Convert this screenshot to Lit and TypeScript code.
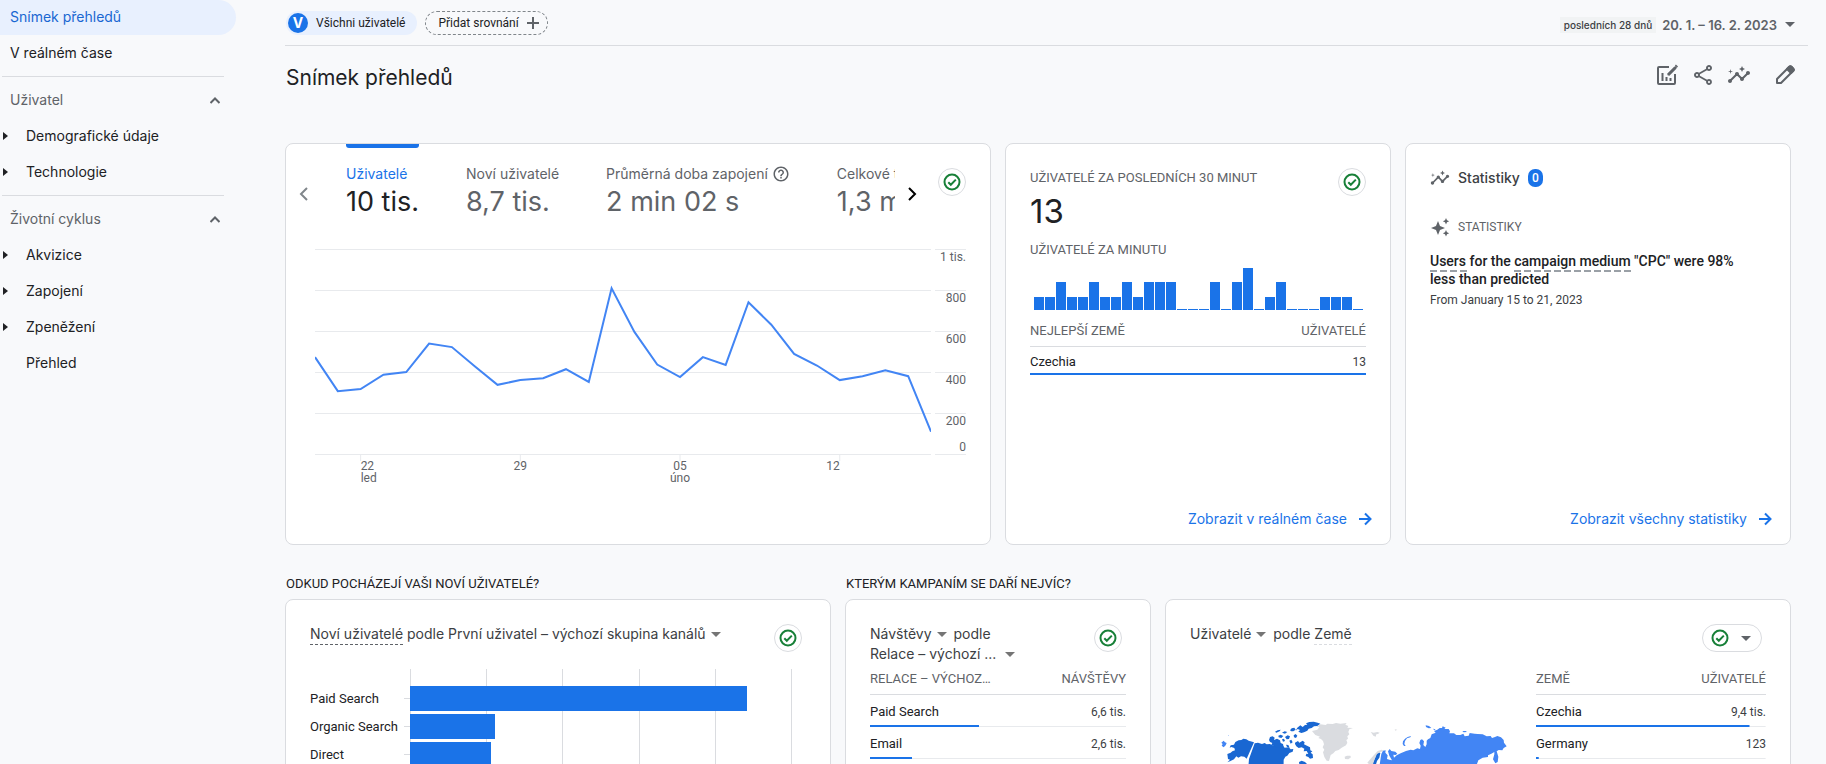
import { LitElement, html, svg, css, nothing } from "lit";
import { customElement, property } from "lit/decorators.js";
import { classMap } from "lit/directives/class-map.js";

const INSIGHTS =
  "M21 8c-1.45 0-2.26 1.44-1.93 2.51l-3.55 3.56c-.3-.09-.74-.09-1.04 0l-2.55-2.55C12.27 10.45 11.46 9 10 9c-1.45 0-2.27 1.44-1.93 2.52l-4.56 4.55C2.44 15.74 1 16.55 1 18c0 1.1.9 2 2 2 1.45 0 2.26-1.44 1.93-2.51l4.55-4.56c.3.09.74.09 1.04 0l2.55 2.55C12.73 16.55 13.54 18 15 18c1.45 0 2.27-1.44 1.93-2.52l3.56-3.55C21.56 12.26 23 11.45 23 10c0-1.1-.9-2-2-2z M15 9l.94-2.07L18 6l-2.06-.93L15 3l-.92 2.07L12 6l2.08.93z M3.5 11L4 9l2-.5L4 8l-.5-2L3 8l-2 .5L3 9z";
const SHARE =
  "M18 16.08c-.76 0-1.44.3-1.96.77L8.91 12.7c.05-.23.09-.46.09-.7s-.04-.47-.09-.7l7.05-4.11c.54.5 1.25.81 2.04.81 1.66 0 3-1.34 3-3s-1.34-3-3-3-3 1.34-3 3c0 .24.04.47.09.7L8.04 9.81C7.5 9.31 6.79 9 6 9c-1.66 0-3 1.34-3 3s1.34 3 3 3c.79 0 1.5-.31 2.04-.81l7.12 4.16c-.05.21-.08.43-.08.65 0 1.61 1.31 2.92 2.92 2.92s2.92-1.31 2.92-2.92c0-1.61-1.31-2.92-2.92-2.92zM18 4c.55 0 1 .45 1 1s-.45 1-1 1-1-.45-1-1 .45-1 1-1zM6 13c-.55 0-1-.45-1-1s.45-1 1-1 1 .45 1 1-.45 1-1 1zm12 7.02c-.55 0-1-.45-1-1s.45-1 1-1 1 .45 1 1-.45 1-1 1z";
const HELP =
  "M11 18h2v-2h-2v2zm1-16C6.48 2 2 6.48 2 12s4.48 10 10 10 10-4.48 10-10S17.52 2 12 2zm0 18c-4.41 0-8-3.59-8-8s3.59-8 8-8 8 3.59 8 8-3.59 8-8 8zm0-14c-2.21 0-4 1.79-4 4h2c0-1.1.9-2 2-2s2 .9 2 2c0 2-3 1.75-3 5h2c0-2.25 3-2.5 3-5 0-2.21-1.79-4-4-4z";

const filled = (d: string, size: number) =>
  html`<svg width=${size} height=${size} viewBox="0 0 24 24" fill="currentColor" aria-hidden="true"><path d=${d}></path></svg>`;

const caret = html`<svg class="caret" width="10" height="5" viewBox="0 0 10 5" fill="currentColor" aria-hidden="true"><path d="M0 0h10L5 5z"></path></svg>`;

const arrowRight = html`<svg width="14" height="14" viewBox="0 0 14 14" fill="none" stroke="currentColor" stroke-width="2" aria-hidden="true"><path d="M1 7h11M7 1.500l5.500 5.500L7 12.500"></path></svg>`;

const check = html`<svg width="18" height="18" viewBox="0 0 18 18" fill="none" stroke="#188038" stroke-width="2" aria-hidden="true"><circle cx="9" cy="9" r="7.500"></circle><path d="M5.300 9.300l2.500 2.500 5-5.200"></path></svg>`;

const shared = css`
  * { box-sizing: border-box; }
  button { border: 0; background: none; padding: 0; margin: 0; color: inherit; font: inherit; text-align: left; }
  a { color: inherit; text-decoration: none; }
  h1, h2, h3, p, ul { margin: 0; padding: 0; font: inherit; }
  svg { display: block; flex: none; }
  table { width: 100%; border-collapse: collapse; }
`;

interface NavItem { text: string; child?: boolean; arrow?: boolean; active?: boolean; }

@customElement("report-nav")
class ReportNav extends LitElement {
  static styles = [shared, css`
    :host { display: block; font: 14px/36px Inter, sans-serif; color: #202124; }
    .item { display: flex; align-items: center; height: 36px; padding-left: 10px; }
    .active { height: 35px; padding-bottom: 1px; background: #e8f0fe; color: #1967d2; border-radius: 0 18px 18px 0; }
    .child { padding-left: 3px; gap: 18px; }
    .child.flat { padding-left: 26px; }
    .group { margin: 5px 12px 0 2px; padding-top: 5px; border-top: 1px solid #dadce0; }
    .toggle { display: flex; align-items: center; justify-content: space-between; width: 100%; height: 36px; padding: 0 4px 0 8px; color: #5f6368; }
  `];
  private item(i: NavItem) {
    return html`<a href="#" class=${classMap({ item: true, active: !!i.active, child: !!i.child, flat: !!i.child && !i.arrow })}>
      ${i.arrow ? html`<svg width="5" height="8" viewBox="0 0 5 8" fill="currentColor" aria-hidden="true"><path d="M0 0l5 4-5 4z"></path></svg>` : nothing}
      <span>${i.text}</span></a>`;
  }
  private group(title: string, items: NavItem[]) {
    return html`<div class="group"><button class="toggle">${title}
      <svg width="10" height="7" viewBox="0 0 10 7" fill="none" stroke="currentColor" stroke-width="2" aria-hidden="true"><path d="M.5 6L5 1.500 9.500 6"></path></svg>
      </button></div>${items.map((i) => this.item(i))}`;
  }
  render() {
    const sub = (text: string, arrow = true): NavItem => ({ text, child: true, arrow });
    return html`<nav>
      ${this.item({ text: "Snímek přehledů", active: true })}
      ${this.item({ text: "V reálném čase" })}
      ${this.group("Uživatel", [sub("Demografické údaje"), sub("Technologie")])}
      ${this.group("Životní cyklus", [sub("Akvizice"), sub("Zapojení"), sub("Zpeněžení"), sub("Přehled", false)])}
    </nav>`;
  }
}

@customElement("status-badge")
class StatusBadge extends LitElement {
  @property({ type: Boolean }) menu = false;
  static styles = [shared, css`
    :host { display: block; flex: none; }
    .badge { display: flex; align-items: center; justify-content: center; gap: 12px; min-width: 28px; height: 28px; border: 1px solid #dadce0; border-radius: 14px; background: #fff; color: #5f6368; }
    .wide { width: 60px; padding-right: 3px; }
  `];
  render() {
    return html`<button class=${classMap({ badge: true, wide: this.menu })} aria-label="Stav dat">${check}${this.menu ? caret : nothing}</button>`;
  }
}

interface Row { name: string; value: string; share: number; }

@customElement("ranked-table")
class RankedTable extends LitElement {
  @property({ attribute: false }) rows: Row[] = [];
  @property() left = "";
  @property() right = "";
  @property({ type: Boolean, reflect: true }) compact = false;
  static styles = [shared, css`
    :host { display: block; font: 12px/20px Roboto, sans-serif; color: #3c4043; }
    th { padding: 0 0 5px; font-size: 13px; font-weight: 400; color: #5f6368; text-align: left; white-space: nowrap; border-bottom: 1px solid #dadce0; }
    td { padding: 7px 0 5px; }
    :host([compact]) td { padding: 5px 0 3px; }
    .name { font-size: 13px; color: #202124; }
    .num { text-align: right; }
    .row {
      background:
        linear-gradient(#1a73e8, #1a73e8) 0 100% / var(--share) 2px no-repeat,
        linear-gradient(#e8eaed, #e8eaed) 0 100% / 100% 1px no-repeat;
    }
  `];
  render() {
    return html`<table>
      <thead><tr><th>${this.left}</th><th class="num">${this.right}</th></tr></thead>
      <tbody>${this.rows.map((r) => html`<tr class="row" style="--share:${r.share}%"><td class="name">${r.name}</td><td class="num">${r.value}</td></tr>`)}</tbody>
    </table>`;
  }
}

const DAILY = [475, 309, 319, 389, 402, 541, 524, 431, 340, 363, 372, 416, 354, 811, 598, 439, 378, 475, 437, 743, 633, 491, 434, 363, 382, 411, 382, 111];

@customElement("trend-chart")
class TrendChart extends LitElement {
  static styles = [shared, css`
    :host { display: grid; grid-template-columns: 1fr 31px; column-gap: 4px; font: 12px/14px Roboto, sans-serif; color: #5f6368; }
    .plot { width: 100%; height: 212px; }
    .step { display: flex; flex-direction: column; justify-content: space-between; height: 41px; border-top: 1px solid #e8eaed; text-align: right; }
    .step:last-child { height: 42px; border-bottom: 1px solid #e8eaed; }
    .days { display: grid; grid-template-columns: repeat(27, 1fr); line-height: 12px; text-align: center; margin-top: -1px; }
    .d22 { grid-column: 3 / 5; text-align: left; }
    .d29 { grid-column: 9 / 11; }
    .d05 { grid-column: 16 / 18; }
    .d12 { grid-column: 23 / 24; text-align: right; }
  `];
  render() {
    const points = DAILY.map((v, i) => `${(i * 616) / 27},${205.5 - v * 0.205}`).join(" ");
    return html`
      <svg class="plot" viewBox="0 0 616 212" preserveAspectRatio="none" fill="none" role="img" aria-label="Uživatelé podle dne">
        ${[0, 41, 82, 123, 164, 205].map((y) => svg`<path d="M0 ${y + 0.5}H616" stroke="#e8eaed" vector-effect="non-scaling-stroke"></path>`)}
        ${[2, 9, 16, 23].map((d) => svg`<path d="M${(d * 616) / 27} 205V212" stroke="#e8eaed" vector-effect="non-scaling-stroke"></path>`)}
        <polyline points=${points} stroke="#4285f4" stroke-width="2" vector-effect="non-scaling-stroke"></polyline>
      </svg>
      <div>${["1 tis.", "800", "600", "400"].map((t) => html`<div class="step">${t}</div>`)}<div class="step"><span>200</span><span>0</span></div></div>
      <div class="days"><span class="d22">22<br>led</span><span class="d29">29</span><span class="d05">05<br>úno</span><span class="d12">12</span></div>`;
  }
}

@customElement("minute-bars")
class MinuteBars extends LitElement {
  static styles = css`
    :host { display: flex; align-items: flex-end; gap: 1px; height: 42px; padding: 0 3px 0 4px; }
    .bar { flex: 1; background: #1a73e8; }
    .v0 { height: 1px; } .v1 { height: 13px; } .v2 { height: 28px; } .v3 { height: 42px; }
  `;
  render() {
    return [..."112112112122200020230120001110"].map((v) => html`<div class="bar v${v}"></div>`);
  }
}

@customElement("channel-bars")
class ChannelBars extends LitElement {
  static styles = css`
    :host { display: grid; grid-template-columns: 94px 6px 1fr; margin-right: 14px; font: 13px/25px Roboto, sans-serif; color: #202124; }
    .names, .ticks, .bars { display: grid; align-content: start; grid-auto-rows: 25px; row-gap: 3px; padding-top: 17px; }
    .ticks { align-items: center; }
    .tick { height: 1px; background: #dadce0; }
    .plot { display: grid; height: 280px; }
    .lines, .bars { grid-area: 1 / 1; }
    .lines { display: flex; justify-content: space-between; }
    .line { width: 1px; background: #dadce0; }
    .bar { background: #1a73e8; }
  `;
  render() {
    const data: [string, number][] = [["Paid Search", 88.2], ["Organic Search", 22.3], ["Direct", 21.2]];
    return html`
      <div class="names">${data.map(([n]) => html`<span>${n}</span>`)}</div>
      <div class="ticks">${data.map(() => html`<div class="tick"></div>`)}</div>
      <div class="plot">
        <div class="lines">${[0, 1, 2, 3, 4, 5].map(() => html`<div class="line"></div>`)}</div>
        <div class="bars">${data.map(([, w]) => html`<div class="bar" style="width:${w}%"></div>`)}</div>
      </div>`;
  }
}

@customElement("world-map")
class WorldMap extends LitElement {
  static styles = css`
    :host { display: block; }
    .map { display: block; width: 100%; }
  `;
  render() {
    return html`<svg class="map" viewBox="-30 -105 1038 330" role="img" aria-label="Mapa světa">
      <g fill="#1967d2">
        <path d="M82 150l10-4 5-4 8-3-2-7-9-3-5 2 3-7 10-2 4-8 10-5 8-1 6-4 9 2 7 4 16 5-22 49-7-6-10-1-8 4-6-4-7 9-12 6-8 3 8-8-6-2z"></path>
        <path d="M164 118l10-2 12 4 8-3 6 4 10-1 7 4 12-2 9 4 12 1 4 4 12-1 6 6 8-1-2 8-10 4-6 8-6 3-5 9-1 58H142l5-60z"></path>
        <path d="M207 108l3-9 8-2 6 4-2 7 9-4 9 5 2 8 7 3 2 9-7 5-9-5-6 3-8-8-8 1 4-8-7-3z"></path>
        <path d="M225 83l8-4 9-2-3 5-10 4zM246 86l8-4 8 2-7 5zM235 95l7-3 8 4-6 6-8-2zM255 99l8-5 7 3-3 8-7 1zM270 79l5-6 8-2 4 6-7 5-6 0zM281 94l6-4 5 5-4 7-6-2zM268 110l6-3 4 8-6 4zM258 122l7 1 4 8-8-2zM246 106l6-2 3 7-6 2z"></path>
        <path d="M292 71l9-7 7 5 7-6 7-1-4-4 10-4 13-1 12 3 8 3-9 7-10 1-7 5-9 2-4 6-10 5-8 2-9-4 5-5-7-3-6 5z"></path>
        <path d="M285 116l9-5 4 5 10-6 6 5-2 6 9 4 9 5 1 9 6 3-5 4 6 5 1 11-9 2-5-5-8-3 2-7 6 1-5-9-9 1 2-8-8-4-9 2-7-5-4-7z"></path>
        <path d="M297 174l8-4 10 4 8 8-3 20-20-2z"></path>
        <path d="M519 174l6-11 4-12 7-7 5 3-3 14-7 10-4 13-9 10z"></path>
      </g>
      <path fill="#4285f4" d="M64 116l7-6 4 5 5 2-3 7-6 6-6-5 3-5zM84 94l2-1 0 3z"></path>
      <g fill="#dadce0">
        <path d="M336 81l16-4 6-8-8-1 11-7 16 2 5-4 16 1 10-3 13 2 19-2-4 5 9 4-3 5 17 1-11 4-3 8 3 7-6 6 2 7-5 4 3 8-4 8-13 7-9 7-10 3-6 7-8 5-5 18-7-1-7-11-4-14 4-8-5-7 4-9-3-10-6-6-8-3 5-4-14-5z"></path>
        <path d="M434 158l7-3 10 0 2 5-8 6-10-1zM512 84l9 2 11-2 7 2-5 4-5 1-2 7-7-3-4-6zM584 76l8 1-6 3zM502 176l10-12 12-13 9-10 12-4 6 3-9 4-11 6-6 13-7 20-10-2z"></path>
      </g>
      <g fill="#4285f4">
        <path d="M542 162l2-12 5-10 8-1-1 7 7 8-2 11 7 2 8 2-8-14-4-13 5-7 5 6 12 2 6 6-5 4-7-1 2 9 8-7 12-6 16-7 14-4 8 2 12-6 8 2 2-10-4-8 3-9 5-2 6 6-2 11 6 6 4-8 0-11 4-4 7-4 4-11 12-5-5-5 10-4 7-5 7 0 2-5 9 4-4 4 13 0 4 7-2 6 14 0 7 5 12 0 9-4 4 8 12-2 3-8 15 2 9 1 15 1 12 6 12-1 4 6 9-3 7-3 11 4 8 8 1 8 8 11-9 5-4 7-11-1-6 4 5 16-2 16-7 4-7-12 4-15 0-7-9 5-10 5 0 5-16 2-13 8-6 16v40H560l-22-36z"></path>
        <path d="M608 120l1-8 6-8 8-5 10-3-2 4-10 3-6 8-2 9 4 6-5 0zM677 64l10 2 7 6-8 1-8-4zM700 74l7 2-5 3zM787 81l10 0 4 3-10 1z"></path>
      </g>
    </svg>`;
  }
}

@customElement("app-root")
class AppRoot extends LitElement {
  static styles = [shared, css`
    :host { display: block; height: 100vh; overflow: hidden; background: #f8f9fb; color: #202124; font: 14px/20px Inter, sans-serif; }
    .shell { display: grid; grid-template-columns: 236px 1fr; }
    .main { padding: 0 18px 0 49px; min-width: 0; }
    .bar { display: flex; align-items: center; gap: 8px; height: 46px; padding: 1px 13px 0 1px; border-bottom: 1px solid #dadce0; }
    .chip { display: flex; align-items: center; height: 24px; border-radius: 12px; font: 12px/16px Roboto, sans-serif; }
    .all { gap: 8px; padding: 0 12px 0 2px; background: #e8f0fe; }
    .initial { width: 20px; height: 20px; border-radius: 50%; background: #1a73e8; color: #fff; font: 700 14px/20px Inter, sans-serif; text-align: center; }
    .add { gap: 8px; padding: 0 8px 0 12px; border: 1px dashed #80868b; }
    .dates { display: flex; align-items: center; gap: 6px; margin-left: auto; padding-top: 4px; font-weight: 600; font-size: 13px; color: #5f6368; }
    .period { padding: 0 4px; background: #f1f3f4; color: #3c4043; font: 500 10px/16px Inter, sans-serif; }
    .dates .caret { margin: 0 0 2px 2px; color: #5f6368; }
    .heading { display: flex; align-items: flex-start; justify-content: space-between; height: 97px; padding: 17px 11px 0 1px; }
    .title { font-size: 21px; line-height: 30px; }
    .tools { display: flex; gap: 12px; color: #5f6368; }
    .edit { margin-left: 10px; }
    .cards { display: grid; column-gap: 14px; padding-right: 17px; }
    .top { grid-template-columns: 706fr 386fr 386fr; }
    .bottom { grid-template-columns: 546fr 306fr 626fr; margin-top: 29px; }
    .card { min-width: 0; border: 1px solid #dadce0; border-radius: 8px; background: #fff; }
    .top .card { min-height: 402px; }
    .bottom .card { min-height: 400px; }
    .pad { display: flex; flex-direction: column; padding: 24px 24px 15px; }
    .section { padding: 0 0 5px 1px; font: 13px/20px Roboto, sans-serif; }
    .caps { font: 13px/20px Roboto, sans-serif; color: #5f6368; }

    .metrics { display: flex; padding-right: 24px; }
    .nudge { display: grid; place-items: center; width: 35px; height: 100px; }
    .prev { color: #80868b; }
    .next { color: #000; }
    .tabs { display: flex; flex: 1; align-items: flex-start; gap: 47px; min-width: 0; margin-left: 25px; overflow: hidden; white-space: nowrap; }
    .tab { flex: none; padding-top: 20px; color: #5f6368; }
    .on { padding-top: 0; color: #202124; }
    .on::before { content: ""; display: block; height: 4px; margin-bottom: 16px; border-radius: 0 0 3px 3px; background: #1a73e8; }
    .label { display: flex; align-items: center; gap: 4px; }
    .on .label { color: #1a73e8; }
    .amount { display: block; margin-top: 2px; font-size: 27px; line-height: 32px; }
    .metrics status-badge { margin: 24px 0 0 8px; }
    trend-chart { margin: 5px 24px 0 29px; }

    .split { display: flex; align-items: flex-start; justify-content: space-between; }
    .now { margin-top: 5px; font-size: 33px; line-height: 36px; }
    .minute { margin-top: 11px; }
    minute-bars { margin-top: 8px; }
    .countries { margin-top: 11px; }
    .more { display: flex; align-items: center; gap: 11px; margin: auto -6px 0 auto; color: #1a73e8; }
    .inline { display: flex; align-items: center; gap: 8px; color: #5f6368; }
    .name { font-weight: 500; color: #3c4043; }
    .count { padding: 0 4px; border-radius: 7px; background: #1a73e8; color: #fff; font: 500 12px/18px Roboto, sans-serif; }
    .tag { margin-top: 29px; font: 12px/20px Roboto, sans-serif; }
    .story { margin-top: 15px; padding-right: 24px; font: 500 14px/18px Roboto, sans-serif; }
    .term { padding-bottom: 3px; background: repeating-linear-gradient(90deg, #9aa0a6 0 7px, transparent 7px 10px) 0 100% / 100% 2px no-repeat; }
    .when { margin-top: 3px; font: 12px/18px Roboto, sans-serif; color: #3c4043; }

    .bottom .split { padding-right: 4px; }
    .subject { color: #3c4043; line-height: 20px; }
    .pick { display: inline-flex; align-items: center; gap: 5px; margin-right: 3px; }
    .wide-gap { gap: 9px; }
    .caret { color: #757575; }
    .dashed { padding-bottom: 2px; border-bottom: 1px dashed #5f6368; }
    .soft { border-color: #dadce0; }
    channel-bars { margin-top: 17px; }
    .sessions { margin-top: 5px; }
    .geo { display: grid; grid-template-columns: 1fr 230px; margin-top: 17px; }
  `];

  private tab(label: string, amount: string, on = false, help = false) {
    return html`<button class=${classMap({ tab: true, on })}>
      <span class="label">${label}${help ? filled(HELP, 18) : nothing}</span><span class="amount">${amount}</span></button>`;
  }

  render() {
    return html`<div class="shell">
      <report-nav></report-nav>
      <main class="main">
        <div class="bar">
          <button class="chip all"><span class="initial">V</span>Všichni uživatelé</button>
          <button class="chip add">Přidat srovnání
            <svg width="12" height="12" viewBox="0 0 12 12" stroke="#5f6368" stroke-width="2" aria-hidden="true"><path d="M6 0v12M0 6h12"></path></svg>
          </button>
          <button class="dates"><span class="period">posledních 28 dnů</span>20. 1. – 16. 2. 2023 ${caret}</button>
        </div>
        <div class="heading">
          <h1 class="title">Snímek přehledů</h1>
          <div class="tools">
            <button aria-label="Upravit srovnání"><svg width="24" height="24" viewBox="0 0 24 24" fill="none" stroke="currentColor" stroke-width="2" aria-hidden="true"><path d="M14 4H4a1 1 0 0 0-1 1v15a1 1 0 0 0 1 1h15a1 1 0 0 0 1-1V11M7.500 10v8M11.500 14v4M15.500 15v3"></path><path d="M12.500 12.500l1-2.500 7-7 1.500 1.500-7 7z" fill="currentColor" stroke="none"></path><path d="M13 12l7.500-7.500" stroke-width="3"></path><path d="M21 3.500l1-1" stroke-width="3"></path></svg></button>
            <button aria-label="Sdílet">${filled(SHARE, 24)}</button>
            <button aria-label="Statistiky">${filled(INSIGHTS, 24)}</button>
            <button class="edit" aria-label="Upravit"><svg width="24" height="24" viewBox="0 0 24 24" fill="none" stroke="currentColor" stroke-width="2" stroke-linejoin="round" aria-hidden="true"><path d="M4 20v-4L16.300 3.700a1.500 1.500 0 0 1 2.100 0l1.900 1.900a1.500 1.500 0 0 1 0 2.100L8 20z"></path><path d="M14 6l2.300-2.300a1.500 1.500 0 0 1 2.100 0l1.900 1.900a1.500 1.500 0 0 1 0 2.100L18 10z" fill="currentColor"></path></svg></button>
          </div>
        </div>

        <div class="cards top">
          <section class="card">
            <div class="metrics">
              <button class="nudge prev" aria-label="Předchozí"><svg width="9" height="14" viewBox="0 0 9 14" fill="none" stroke="currentColor" stroke-width="2" aria-hidden="true"><path d="M8 1L2 7l6 6"></path></svg></button>
              <div class="tabs">
                ${this.tab("Uživatelé", "10 tis.", true)}
                ${this.tab("Noví uživatelé", "8,7 tis.")}
                ${this.tab("Průměrná doba zapojení", "2 min 02 s", false, true)}
                ${this.tab("Celkové tržby", "1,3 mil. CZK")}
              </div>
              <button class="nudge next" aria-label="Další"><svg width="9" height="14" viewBox="0 0 9 14" fill="none" stroke="currentColor" stroke-width="2" aria-hidden="true"><path d="M1 1l6 6-6 6"></path></svg></button>
              <status-badge></status-badge>
            </div>
            <trend-chart></trend-chart>
          </section>

          <section class="card pad">
            <div class="split">
              <div><h2 class="caps">UŽIVATELÉ ZA POSLEDNÍCH 30 MINUT</h2><p class="now">13</p></div>
              <status-badge></status-badge>
            </div>
            <h3 class="caps minute">UŽIVATELÉ ZA MINUTU</h3>
            <minute-bars></minute-bars>
            <ranked-table compact class="countries" left="NEJLEPŠÍ ZEMĚ" right="UŽIVATELÉ" .rows=${[{ name: "Czechia", value: "13", share: 100 }]}></ranked-table>
            <a class="more" href="#">Zobrazit v reálném čase ${arrowRight}</a>
          </section>

          <section class="card pad">
            <div class="inline">${filled(INSIGHTS, 20)}<h2 class="name">Statistiky</h2><span class="count">0</span></div>
            <div class="inline tag"><svg width="20" height="20" viewBox="0 0 20 20" fill="currentColor" aria-hidden="true"><path d="M8 4l2 5 5 2-5 2-2 5-2-5-5-2 5-2zM16 1l1 2.200 2.200 1-2.200 1-1 2.200-1-2.200-2.200-1 2.200-1zM16 13l1 2.200 2.200 1-2.200 1-1 2.200-1-2.200-2.200-1 2.200-1z"></path></svg>STATISTIKY</div>
            <p class="story"><span class="term">Users </span>for the <span class="term">campaign medium </span>"CPC" were 98% less than predicted</p>
            <p class="when">From January 15 to 21, 2023</p>
            <a class="more" href="#">Zobrazit všechny statistiky ${arrowRight}</a>
          </section>
        </div>

        <div class="cards bottom">
          <h2 class="section">ODKUD POCHÁZEJÍ VAŠI NOVÍ UŽIVATELÉ?</h2>
          <h2 class="section">KTERÝM KAMPANÍM SE DAŘÍ NEJVÍC?</h2>
          <div></div>
          <section class="card pad">
            <div class="split">
              <div class="subject"><span class="dashed">Noví uživatelé</span> <button class="pick">podle První uživatel – výchozí skupina kanálů ${caret}</button></div>
              <status-badge></status-badge>
            </div>
            <channel-bars></channel-bars>
          </section>
          <section class="card pad">
            <div class="split">
              <div class="subject"><button class="pick">Návštěvy ${caret}</button> podle<br><button class="pick wide-gap">Relace – výchozí ... ${caret}</button></div>
              <status-badge></status-badge>
            </div>
            <ranked-table class="sessions" left="RELACE – VÝCHOZ…" right="NÁVŠTĚVY"
              .rows=${[{ name: "Paid Search", value: "6,6 tis.", share: 42.6 }, { name: "Email", value: "2,6 tis.", share: 16.6 }]}></ranked-table>
          </section>
          <section class="card pad">
            <div class="split">
              <div class="subject"><button class="pick">Uživatelé ${caret}</button> podle <span class="dashed soft">Země</span></div>
              <status-badge menu></status-badge>
            </div>
            <div class="geo">
              <world-map></world-map>
              <ranked-table left="ZEMĚ" right="UŽIVATELÉ"
                .rows=${[{ name: "Czechia", value: "9,4 tis.", share: 93 }, { name: "Germany", value: "123", share: 1.2 }]}></ranked-table>
            </div>
          </section>
        </div>
      </main>
    </div>`;
  }
}
